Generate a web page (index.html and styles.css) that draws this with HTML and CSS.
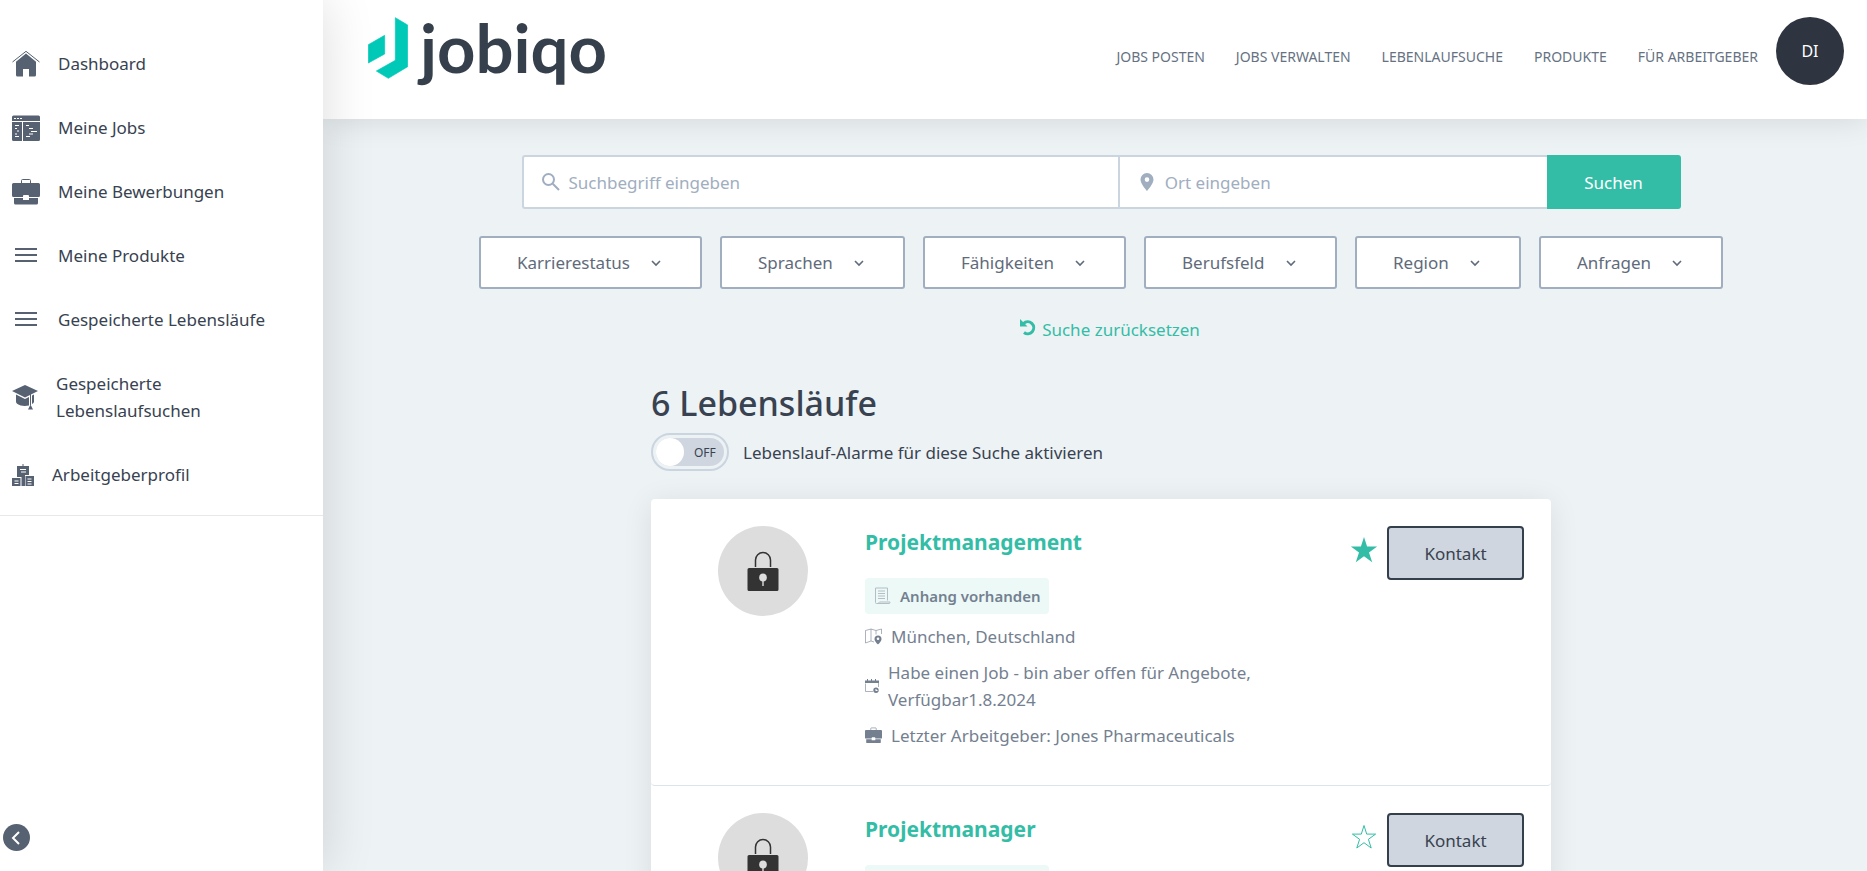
FILE: index.html
```html
<!DOCTYPE html>
<html lang="de">
<head>
  <meta charset="UTF-8">
  <meta name="viewport" content="width=device-width, initial-scale=1">
  <title>Lebenslaufsuche</title>
  <link rel="stylesheet" href="styles.css">
</head>
<body>
  <!-- Shared icons -->
  <svg class="sprite" aria-hidden="true">
    <symbol id="icon-menu" viewBox="0 0 28 28">
      <path d="M3 6h22v2H3zM3 12h22v2H3zM3 18h22v2H3z"/>
    </symbol>
    <symbol id="icon-briefcase" viewBox="0 0 28 28">
      <path d="M9.500 5V2.500a1 1 0 0 1 1-1h7a1 1 0 0 1 1 1V5" fill="none" stroke="currentColor" stroke-width="1"/>
      <path d="M1.500 5h25A1.500 1.500 0 0 1 28 6.500v11a1.500 1.500 0 0 1-1.500 1.500H17v-1a1 1 0 0 0-1-1h-4a1 1 0 0 0-1 1v1H1.500A1.500 1.500 0 0 1 0 17.500v-11A1.500 1.500 0 0 1 1.500 5z"/>
      <path d="M2 20h9v2h6v-2h9v5a1.500 1.500 0 0 1-1.500 1.500h-21A1.500 1.500 0 0 1 2 25z"/>
    </symbol>
    <symbol id="icon-chevron" viewBox="0 0 10 10">
      <path d="M1 3l4 4 4-4" fill="none" stroke="currentColor" stroke-width="1.600"/>
    </symbol>
    <symbol id="icon-lock" viewBox="0 0 32 40">
      <path d="M8.500 16V9a7.500 7.500 0 0 1 15 0v7" fill="none" stroke="currentColor" stroke-width="1.500"/>
      <path fill-rule="evenodd" d="M2 17h28a1.500 1.500 0 0 1 1.500 1.500v20A1.500 1.500 0 0 1 30 40H2a1.500 1.500 0 0 1-1.500-1.500v-20A1.500 1.500 0 0 1 2 17zm14 5.500a4 4 0 0 0-.7 7.900V35h1.400v-4.600a4 4 0 0 0-.7-7.900z"/>
    </symbol>
    <symbol id="icon-scroll" viewBox="0 0 17 18">
      <path d="M4 16.500H2.500a1 1 0 0 1-1-1V1h12v12.500M4 16.500l1.500-1.500h10.500v.5a1 1 0 0 1-1 1zM4 4h7M4 6.500h7M4 9h7M4 11.500h7" fill="none" stroke="currentColor"/>
    </symbol>
    <symbol id="icon-map" viewBox="0 0 17 17">
      <path d="M9 14l-3-1-5.500 2V2.500L6 1l5 1.500L16.500 1v5M6 1v12M11 2.500v4" fill="none" stroke="currentColor" stroke-opacity="0.6"/>
      <path fill-rule="evenodd" d="M13 7.500a3.500 3.500 0 0 0-3.500 3.500c0 2.500 3.500 5.500 3.500 5.500s3.500-3 3.500-5.500A3.500 3.500 0 0 0 13 7.500zm0 2a1.300 1.300 0 1 1 0 2.600 1.300 1.300 0 0 1 0-2.600z"/>
    </symbol>
    <symbol id="icon-calendar" viewBox="0 0 14 14">
      <path d="M8 12.500H.5v-8M13.500 4v4" fill="none" stroke="currentColor" stroke-opacity="0.6"/>
      <path d="M0 1.500h2V0h1v1.500h3V0h1v1.500h3V0h1v1.500h3V4H0z"/>
      <path fill-rule="evenodd" d="M11 8.500a2.700 2.700 0 1 0 0 5.400 2.700 2.700 0 0 0 0-5.400zm-.5 1.500h1v1h1v1h-2z"/>
    </symbol>
    <symbol id="icon-star" viewBox="0 0 28 28">
      <path d="M14 1l3.100 9.600h10.100L19 16.500l3.200 9.700L14 20.300l-8.200 5.900L9 16.500.8 10.600h10.100z"/>
    </symbol>
    <symbol id="icon-star-outline" viewBox="0 0 28 28">
      <path d="M14 2.500l2.700 8.600h8.900l-7.200 5.200 2.800 8.700-7.200-5.300L6.800 25l2.800-8.700-7.200-5.200h8.900z" fill="none" stroke="currentColor"/>
    </symbol>
  </svg>

  <div class="app">
    <aside class="sidebar">
      <ul class="side-nav">
        <li><a href="#">
          <svg class="icon" viewBox="0 0 28 28" aria-hidden="true">
            <path d="M14 3.500l10 8.200V25a1.500 1.500 0 0 1-1.500 1.500H17V19h-6v7.500H5.500A1.500 1.500 0 0 1 4 25V11.700z"/>
            <path d="M.5 12L14 1.300 27.500 12" fill="none" stroke="currentColor"/>
          </svg>
          Dashboard
        </a></li>
        <li><a href="#">
          <svg class="icon" viewBox="0 0 28 28" aria-hidden="true">
            <path d="M1.500 1.500h25A1.500 1.500 0 0 1 28 3v4H0V3a1.500 1.500 0 0 1 1.500-1.500zM0 8h10v19H1.500A1.500 1.500 0 0 1 0 25.500zM11 8h17v17.500a1.500 1.500 0 0 1-1.500 1.500H11z"/>
            <path d="M2 4.500h2M5 4.500h2M8 4.500h2M3 11.500h4M3 14.500h2M5 17h2M3 20h2M3 22.500h4M14 11.500h3M17 14.500h4M19 17.500h6M17 20h4M14 22.500h4" stroke="#fff"/>
          </svg>
          Meine Jobs
        </a></li>
        <li><a href="#"><svg class="icon" aria-hidden="true"><use href="#icon-briefcase"/></svg>Meine Bewerbungen</a></li>
        <li><a href="#"><svg class="icon" aria-hidden="true"><use href="#icon-menu"/></svg>Meine Produkte</a></li>
        <li><a href="#"><svg class="icon" aria-hidden="true"><use href="#icon-menu"/></svg>Gespeicherte Lebensläufe</a></li>
        <li><a href="#">
          <svg class="icon icon-md" viewBox="0 0 26 26" aria-hidden="true">
            <path d="M13 1l13 6-13 6.500L0 7z"/>
            <path d="M4 10.500l9 4.500 4-2v8.500c-4 1-9 .5-11.500-1.500C4 19 4 18 4 17z"/>
            <path d="M20 11.500l2-1V18a4 4 0 0 1-2 2z"/>
            <path d="M18.500 9.500V21" stroke="currentColor"/>
            <path d="M18.500 20.500l2.500 5h-5z"/>
          </svg>
          Gespeicherte Lebenslaufsuchen
        </a></li>
        <li><a href="#">
          <svg class="icon icon-sm" viewBox="0 0 22 22" aria-hidden="true">
            <path d="M10.500 0h1v2H17v9h-4v11H9.500v-9H5V2h5.500zM0 14h8.500v8H0zM13.500 12H22v10h-8.500z"/>
            <path d="M8 5.500h6M9 8h5M2.500 17h4M2.500 19.500h4M15.500 15h4M15.500 17.500h4M15.500 20h4" stroke="#fff"/>
          </svg>
          Arbeitgeberprofil
        </a></li>
      </ul>
      <button class="collapse" type="button" aria-label="Menü einklappen">
        <svg viewBox="0 0 27 27" aria-hidden="true"><path d="M16 8l-6 6 6 6" fill="none" stroke="currentColor" stroke-width="2"/></svg>
      </button>
    </aside>

    <div class="page">
      <header class="header">
        <a class="logo" href="#">
          <svg class="logo-mark" viewBox="84 51 120 186" aria-hidden="true">
            <path d="M85 134l49-28v56l-49 27zM166 53l37 22v125l-58 35-36-22 57-32z" stroke="currentColor" stroke-width="2" stroke-linejoin="round"/>
          </svg>
          <span class="logo-text">jobiqo</span>
        </a>
        <nav class="main-nav">
          <a href="#">Jobs posten</a>
          <a href="#">Jobs verwalten</a>
          <a href="#">Lebenlaufsuche</a>
          <a href="#">Produkte</a>
          <a href="#">Für Arbeitgeber</a>
        </nav>
        <button class="avatar" type="button">DI</button>
      </header>

      <main class="content">
        <form class="search">
          <label class="field field-keyword">
            <svg viewBox="0 0 18 18" aria-hidden="true"><path d="M11 11l6 6M12 6.500a5.500 5.500 0 1 1-11 0 5.500 5.500 0 0 1 11 0z" fill="none" stroke="currentColor" stroke-width="2"/></svg>
            <input type="text" placeholder="Suchbegriff eingeben" aria-label="Suchbegriff">
          </label>
          <label class="field field-place">
            <svg viewBox="0 0 18 18" aria-hidden="true"><path fill-rule="evenodd" d="M9 0a6.500 6.500 0 0 0-6.500 6.500C2.500 11 9 18 9 18s6.500-7 6.500-11.500A6.500 6.500 0 0 0 9 0zm0 4.300a2.300 2.300 0 1 1 0 4.600 2.300 2.300 0 0 1 0-4.600z"/></svg>
            <input type="text" placeholder="Ort eingeben" aria-label="Ort">
          </label>
          <button class="search-button" type="submit">Suchen</button>
        </form>

        <div class="filters">
          <label class="filter"><select aria-label="Karrierestatus"><option>Karrierestatus</option></select><svg aria-hidden="true"><use href="#icon-chevron"/></svg></label>
          <label class="filter"><select aria-label="Sprachen"><option>Sprachen</option></select><svg aria-hidden="true"><use href="#icon-chevron"/></svg></label>
          <label class="filter"><select aria-label="Fähigkeiten"><option>Fähigkeiten</option></select><svg aria-hidden="true"><use href="#icon-chevron"/></svg></label>
          <label class="filter"><select aria-label="Berufsfeld"><option>Berufsfeld</option></select><svg aria-hidden="true"><use href="#icon-chevron"/></svg></label>
          <label class="filter"><select aria-label="Region"><option>Region</option></select><svg aria-hidden="true"><use href="#icon-chevron"/></svg></label>
          <label class="filter"><select aria-label="Anfragen"><option>Anfragen</option></select><svg aria-hidden="true"><use href="#icon-chevron"/></svg></label>
        </div>

        <a class="reset" href="#">
          <svg viewBox="0 0 17 17" aria-hidden="true">
            <path d="M3.500 4.500A6 6 0 1 1 4 13.500" fill="none" stroke="currentColor" stroke-width="3"/>
            <path d="M0 0l7.500 7.500H0z"/>
          </svg>
          Suche zurücksetzen
        </a>

        <section class="results">
          <h1>6 Lebensläufe</h1>
          <label class="alert-toggle">
            <input type="checkbox">
            <span class="switch"><span class="track"><span class="knob"></span><span class="state">OFF</span></span></span>
            Lebenslauf-Alarme für diese Suche aktivieren
          </label>

          <div class="list">
            <article class="resume">
              <div class="photo"><svg aria-hidden="true"><use href="#icon-lock"/></svg></div>
              <div class="info">
                <h2><a href="#">Projektmanagement</a></h2>
                <span class="badge"><svg aria-hidden="true"><use href="#icon-scroll"/></svg>Anhang vorhanden</span>
                <ul class="facts">
                  <li><svg aria-hidden="true"><use href="#icon-map"/></svg>München, Deutschland</li>
                  <li><svg class="small" aria-hidden="true"><use href="#icon-calendar"/></svg>Habe einen Job - bin aber offen für Angebote, Verfügbar1.8.2024</li>
                  <li><svg aria-hidden="true"><use href="#icon-briefcase"/></svg>Letzter Arbeitgeber: Jones Pharmaceuticals</li>
                </ul>
              </div>
              <div class="actions">
                <button class="star" type="button" aria-label="Gespeichert"><svg aria-hidden="true"><use href="#icon-star"/></svg></button>
                <button class="contact" type="button">Kontakt</button>
              </div>
            </article>
            <article class="resume">
              <div class="photo"><svg aria-hidden="true"><use href="#icon-lock"/></svg></div>
              <div class="info">
                <h2><a href="#">Projektmanager</a></h2>
                <span class="badge"><svg aria-hidden="true"><use href="#icon-scroll"/></svg>Anhang vorhanden</span>
              </div>
              <div class="actions">
                <button class="star" type="button" aria-label="Speichern"><svg aria-hidden="true"><use href="#icon-star-outline"/></svg></button>
                <button class="contact" type="button">Kontakt</button>
              </div>
            </article>
          </div>
        </section>
      </main>
    </div>
  </div>
</body>
</html>
```

FILE: styles.css
```css
* {
  box-sizing: border-box;
}
body {
  margin: 0;
  font-family: "Noto Sans", "Open Sans", sans-serif;
  font-size: 17px;
  line-height: 27px;
  color: #384250;
  background-color: #edf2f5;
}
a {
  color: inherit;
  text-decoration: none;
}
ul {
  list-style: none;
  margin: 0;
  padding: 0;
}
button,
input,
select {
  font: inherit;
  cursor: pointer;
}
svg {
  display: block;
  flex: none;
  fill: currentColor;
}
.sprite {
  position: absolute;
  width: 0;
  height: 0;
}
.app {
  display: flex;
  height: 100vh;
  overflow: hidden;
}

/* Sidebar */
.sidebar {
  z-index: 2;
  display: flex;
  flex-direction: column;
  justify-content: space-between;
  flex: none;
  width: 323px;
  background-color: #fff;
  box-shadow: 0 0 50px rgba(0, 0, 0, 0.14);
}
.side-nav {
  display: flex;
  flex-direction: column;
  gap: 37px;
  padding: 50px 40px 27px 12px;
  border-bottom: 1px solid #e6e9ec;
}
.side-nav a {
  display: flex;
  align-items: center;
  gap: 18px;
}
.icon {
  width: 28px;
  height: 28px;
  margin: -1px 0;
  color: #566172;
}
.icon-md {
  width: 26px;
  height: 26px;
}
.icon-sm {
  width: 22px;
  height: 22px;
}
.collapse {
  width: 27px;
  height: 27px;
  margin: 0 0 20px 3px;
  padding: 0;
  border: none;
  border-radius: 50%;
  color: #fff;
  background-color: #566172;
}

/* Header */
.page {
  display: flex;
  flex-direction: column;
  flex: 1;
  min-width: 0;
}
.header {
  z-index: 1;
  display: flex;
  align-items: flex-start;
  flex: none;
  height: 119px;
  padding: 17px 23px 0 45px;
  background-color: #fff;
  box-shadow: 0 0 30px rgba(0, 0, 0, 0.12);
}
.logo {
  display: flex;
  gap: 12px;
  margin-right: auto;
}
.logo-mark {
  width: 40px;
  height: 62px;
  color: #00c9b7;
}
.logo-text {
  font-family: Lato, sans-serif;
  font-size: 67px;
  font-weight: 700;
  line-height: 60px;
  color: #35404c;
}
.main-nav {
  display: flex;
  gap: 31px;
  margin: 26px 18px 0 0;
  font-size: 14px;
  text-transform: uppercase;
  color: #667282;
}
.avatar {
  width: 68px;
  height: 68px;
  padding: 0;
  border: none;
  border-radius: 50%;
  font-size: 16px;
  color: #fff;
  background-color: #2e3440;
}

/* Search */
.content {
  display: flex;
  flex-direction: column;
  align-items: center;
  flex: 1;
  padding: 36px 0 0 12px;
  overflow-y: auto;
  scrollbar-width: none;
}
.search {
  display: flex;
  width: 100%;
  max-width: 1159px;
}
.field {
  display: flex;
  align-items: center;
  gap: 9px;
  height: 54px;
  padding: 0 18px;
  border: 2px solid #cbd5e0;
  color: #a0aec0;
  background-color: #fff;
}
.field svg {
  width: 18px;
  height: 18px;
}
.field input {
  flex: 1;
  min-width: 0;
  padding: 0;
  border: none;
  outline: none;
  background: none;
}
.field input::placeholder {
  color: #a0aec0;
}
.field-keyword {
  flex: 10;
  border-right: none;
  border-radius: 3px 0 0 3px;
}
.field-place {
  flex: 7;
  border-right: none;
}
.search-button {
  width: 134px;
  border: none;
  border-radius: 0 3px 3px 0;
  color: #fff;
  background-color: #34bda6;
}
.filters {
  display: flex;
  flex-wrap: wrap;
  justify-content: center;
  gap: 18px;
  margin-top: 27px;
}
.filter {
  display: grid;
  align-items: center;
  justify-items: end;
  color: #5f6b7b;
}
.filter select,
.filter svg {
  grid-area: 1 / 1;
}
.filter select {
  height: 53px;
  padding: 0 70px 0 36px;
  appearance: none;
  border: 2px solid #a0aec0;
  border-radius: 3px;
  color: inherit;
  background-color: #fff;
}
.filter svg {
  width: 10px;
  height: 10px;
  margin-right: 41px;
  pointer-events: none;
}
.reset {
  display: flex;
  gap: 5px;
  margin: 27px 0 0 18px;
  color: #34bda6;
}
.reset svg {
  width: 17px;
  height: 17px;
  margin-top: 3px;
}

/* Results */
.results {
  width: 100%;
  max-width: 900px;
  margin-top: 36px;
}
h1 {
  margin: 0;
  font-size: 34px;
  font-weight: 500;
  line-height: 48px;
}
.alert-toggle {
  display: flex;
  align-items: center;
  gap: 14px;
  width: max-content;
  margin-top: 6px;
}
.alert-toggle input {
  position: absolute;
  opacity: 0;
}
.switch {
  width: 78px;
  height: 38px;
  padding: 3px;
  border: 2px solid #cbd5e0;
  border-radius: 19px;
}
.track {
  display: flex;
  align-items: center;
  height: 28px;
  border-radius: 14px;
  background-color: #cfd6df;
}
.knob {
  width: 28px;
  height: 28px;
  border-radius: 50%;
  background-color: #fff;
}
.state {
  margin-left: 10px;
  font-size: 12px;
}
.list {
  margin-top: 28px;
  border-radius: 4px;
  background-color: #fff;
  box-shadow: 0 4px 30px rgba(0, 0, 0, 0.09);
}
.resume {
  display: flex;
  align-items: flex-start;
  min-height: 287px;
  padding: 27px;
  border-bottom: 1px solid #dde3eb;
  border-radius: 4px;
}
.photo {
  display: flex;
  justify-content: center;
  flex: none;
  width: 90px;
  height: 90px;
  margin: 0 57px 0 40px;
  padding-top: 25px;
  border-radius: 50%;
  color: #333;
  background-color: #ddd;
}
.photo svg {
  width: 32px;
  height: 40px;
}
.info {
  width: 410px;
  color: #748090;
}
h2 {
  margin: 3px 0 22px;
  font-size: 21px;
  font-weight: 700;
  color: #34bda6;
}
.badge {
  display: inline-flex;
  align-items: center;
  gap: 9px;
  height: 36px;
  padding: 0 9px;
  border-radius: 4px;
  font-size: 15px;
  font-weight: 600;
  background-color: #ecf9f7;
}
.badge svg {
  width: 17px;
  height: 18px;
  color: #b3bec6;
}
.facts {
  display: flex;
  flex-direction: column;
  gap: 9px;
  margin-top: 9px;
}
.facts li {
  display: flex;
  align-items: center;
  gap: 9px;
}
.facts svg {
  width: 17px;
  height: 17px;
}
.facts .small {
  width: 14px;
  height: 14px;
}
.actions {
  display: flex;
  gap: 9px;
  margin-left: auto;
}
.star {
  width: 28px;
  height: 28px;
  margin-top: 10px;
  padding: 0;
  border: none;
  color: #34bda6;
  background: none;
}
.star svg {
  width: 28px;
  height: 28px;
}
.contact {
  width: 137px;
  height: 54px;
  border: 2px solid #333f4a;
  border-radius: 4px;
  color: #384250;
  background-color: #cfd6df;
}
```
